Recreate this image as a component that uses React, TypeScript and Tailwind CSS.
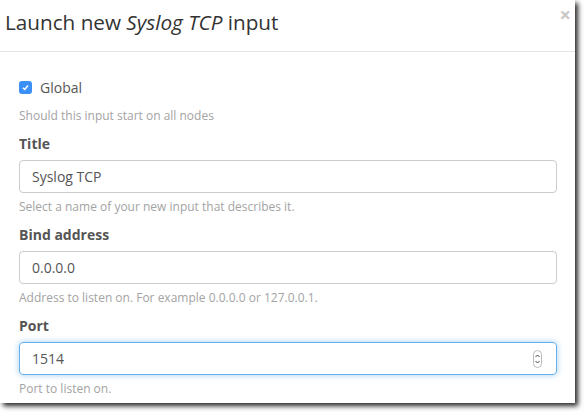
import React from 'react';

const Field: React.FC<{
  label: string;
  value: string;
  help: string;
  focused?: boolean;
  spinner?: boolean;
}> = ({ label, value, help, focused, spinner }) => (
  <div className="mb-[10px]">
    <label className="block text-[14px] leading-[20px] font-bold text-[#555] mb-[6px]">{label}</label>
    <div
      className={
        focused
          ? 'h-[33px] w-[538px] rounded-[4px] border border-[#66afe9] shadow-[0_0_6px_rgba(102,175,233,0.6)] flex items-center justify-between pl-[12px] pr-[14px]'
          : 'h-[33px] w-[538px] rounded-[4px] border border-[#ccc] flex items-center pl-[12px]'
      }
    >
      <span className="text-[14px] text-[#555]">{value}</span>
      {spinner && (
        <div className="w-[9px] h-[18px] rounded-full border border-[#bbb] flex flex-col items-center justify-center">
          <svg width="7" height="14" viewBox="0 0 7 14">
            <path d="M1.5 5 L3.5 3 L5.5 5" fill="none" stroke="#444" strokeWidth="1" />
            <path d="M1.5 9 L3.5 11 L5.5 9" fill="none" stroke="#444" strokeWidth="1" />
          </svg>
        </div>
      )}
    </div>
    <p className="mt-[5px] text-[12px] leading-[17px] text-[#a3a3a3]">{help}</p>
  </div>
);

const App: React.FC = () => {
  return (
    <div className="min-h-screen w-[585px] h-[414px] bg-white font-['Open_Sans',sans-serif]">
      <div className="w-[575px] h-[403px] bg-white shadow-[3px_3px_5px_rgba(0,0,0,0.85)] overflow-hidden">
        {/* Header */}
        <div className="h-[52px] border-b border-[#e5e5e5] flex items-start justify-between pl-[5px] pr-[4px] pt-[5px]">
          <h4 className="text-[20.7px] leading-[34px] text-[#333]">
            Launch new <em>Syslog TCP</em> input
          </h4>
          <span className="text-[20px] leading-[20px] font-bold text-[#c8c8c8]">×</span>
        </div>

        {/* Body */}
        <div className="px-[19px] pt-[25px]">
          <div className="flex items-center h-[20px]">
            <span className="w-[13px] h-[13px] rounded-[3px] bg-[#3b8ff6] flex items-center justify-center">
              <svg width="9" height="9" viewBox="0 0 9 9">
                <path d="M2 4.8 L3.8 6.5 L7 2.5" fill="none" stroke="#fff" strokeWidth="1.5" />
              </svg>
            </span>
            <span className="ml-[8px] text-[14px] text-[#555]">Global</span>
          </div>
          <p className="mt-[10px] text-[12px] leading-[17px] text-[#a3a3a3]">Should this input start on all nodes</p>

          <div className="mt-[10px]">
            <Field label="Title" value="Syslog TCP" help="Select a name of your new input that describes it." />
            <Field
              label="Bind address"
              value="0.0.0.0"
              help="Address to listen on. For example 0.0.0.0 or 127.0.0.1."
            />
            <Field label="Port" value="1514" help="Port to listen on." focused spinner />
          </div>
        </div>
      </div>
    </div>
  );
};

export default App;
